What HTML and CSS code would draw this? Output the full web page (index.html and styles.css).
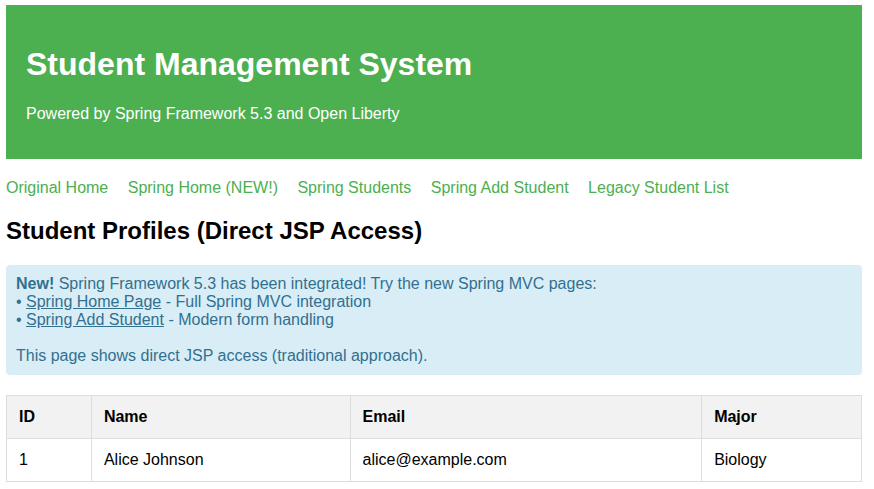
FILE: index.html
```html
<!DOCTYPE html>
<html lang="en">
<head>
<meta charset="utf-8">
<title>Student Management System</title>
<link rel="stylesheet" href="styles.css">
</head>
<body>
<div class="header">
  <h1>Student Management System</h1>
  <p>Powered by Spring Framework 5.3 and Open Liberty</p>
</div>
<div class="nav">
  <a href="#">Original Home</a>
  <a href="#">Spring Home (NEW!)</a>
  <a href="#">Spring Students</a>
  <a href="#">Spring Add Student</a>
  <a href="#">Legacy Student List</a>
</div>
<h2>Student Profiles (Direct JSP Access)</h2>
<div class="alert">
  <strong>New!</strong> Spring Framework 5.3 has been integrated! Try the new Spring MVC pages:<br>
  &bull; <a href="#">Spring Home Page</a> - Full Spring MVC integration<br>
  &bull; <a href="#">Spring Add Student</a> - Modern form handling<br>
  <br>
  This page shows direct JSP access (traditional approach).
</div>
<table class="students">
  <colgroup>
    <col class="c-id">
    <col class="c-name">
    <col class="c-email">
    <col class="c-major">
  </colgroup>
  <thead>
    <tr><th>ID</th><th>Name</th><th>Email</th><th>Major</th></tr>
  </thead>
  <tbody>
    <tr><td>1</td><td>Alice Johnson</td><td>alice@example.com</td><td>Biology</td></tr>
  </tbody>
</table>
</body>
</html>
```
FILE: styles.css
```css
html, body {
  background: #fff;
}
body {
  margin: 5px 12px 8px 6px;
  font-family: Arial, "Liberation Sans", sans-serif;
  font-size: 16px;
  color: #000;
}
.header {
  background: #4CAF50;
  color: #fff;
  padding: 20px;
}
.header h1 {
  margin: 21.44px 0;
  font-size: 32px;
  font-weight: bold;
}
.header p {
  margin: 16px 0;
}
.nav {
  margin: 20px 0;
}
.nav a {
  color: #4CAF50;
  text-decoration: none;
  margin-right: 15px;
}
h2 {
  font-size: 24px;
  margin: 19.92px 0;
}
.alert {
  background: #d9edf7;
  color: #31708f;
  padding: 10px;
  border-radius: 4px;
  margin: 20px 0;
}
.alert a {
  color: #31708f;
}
.students {
  width: 100%;
  border-collapse: collapse;
}
.students th,
.students td {
  border: 1px solid #ddd;
  padding: 12px;
  text-align: left;
}
.students th {
  background: #f2f2f2;
}
.c-id { width: 85px; }
.c-name { width: 259px; }
.c-email { width: 352px; }
.c-major { width: 160px; }
```
